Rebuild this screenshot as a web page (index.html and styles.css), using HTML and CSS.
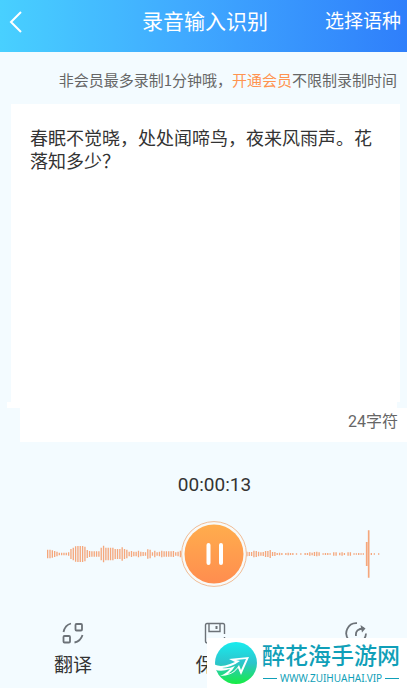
FILE: index.html
```html
<!DOCTYPE html>
<html lang="zh-CN">
<head>
<meta charset="utf-8">
<meta name="viewport" content="width=device-width, initial-scale=1">
<title>录音输入识别</title>
<link rel="stylesheet" href="styles.css">
</head>
<body>
<header class="topbar">
  <button class="back" type="button" aria-label="返回">
    <svg width="14" height="22" viewBox="0 0 14 22"><path d="M12 1L2 11L12 21" fill="none" stroke="#fff" stroke-width="2"/></svg>
  </button>
  <h1 class="title">录音输入识别</h1>
  <button class="language" type="button">选择语种</button>
</header>
<main>
  <p class="notice">非会员最多录制1分钟哦，<a href="#vip">开通会员</a>不限制录制时间</p>
  <textarea class="result" aria-label="识别结果">春眠不觉晓，处处闻啼鸟，夜来风雨声。花落知多少？</textarea>
  <div class="seam"></div>
  <div class="count">24字符</div>
  <div class="timer">00:00:13</div>
  <div class="recorder">
    <svg class="wave" viewBox="0 -75 1001 150" preserveAspectRatio="none" fill="none" stroke="#f5a77c" aria-hidden="true">
      <path stroke-width="4" d="M2-13V13M9-13V13M16-11V11M23-9V9M30-7V7M37-4V4M44-4V4M51-4V4M58-4V4M65-5V5M72-15V15M79-19V19M86-23V23M93-24V24M100-24V24M107-24V24M114-22V22M121-12V12M128-9V9M135-8V8M142-8V8M149-8V8M156-8V8M163-19V19M170-25V25M177-19V19M184-19V19M191-19V19M198-19V19M205-15V15M212-15V15M219-15V15M226-20V20M233-15V15M240-13V13M247-7V7M254-9V9M261-7V7M268-7V7M275-10V10M282-7V7M289-6V6M296-5V5M303-14V14M310-13V13M317-5V5M324-10V10M331-5V5M338-7V7M345-10V10M352-8V8M359-8V8M366-8V8M373-8V8M380-9V9M387-5V5M394-7V7M401-10V10M408-8V8"/>
      <path stroke-width="4" d="M594-8V8M601-7V7M608-6V6M615-6V6M622-10V10M629-9V9M636-7V7M643-5V5M650-6V6M657-9V9M664-9V9M671-12V12M678-6V6M685-6V6M692-3V3M699-4V4M706-3V3M718-3V3M725-4V4M732-3V3M739-3V3M750-2V2M763-2V2M776-3V3M783-3V3M790-5V5M797-4V4M804-6V6M811-7V7M818-5V5M830-2V2M837-3V3M844-3V3M851-2V2M862-5V5M869-5V5M880-4V4M887-5V5M894-3V3M905-5V5M912-5V5M923-2V2M930-2V2M937-3V3M944-2V2M951-2V2M975-3V3M984-2V2M997-2V2"/>
      <path stroke-width="5" d="M961-36V36M967-71V71"/>
    </svg>
    <button class="pause" type="button" aria-label="暂停录音">
      <svg width="66" height="66" viewBox="0 0 66 66">
        <defs><linearGradient id="orange" x1="0" y1="0" x2="0" y2="1"><stop offset="0" stop-color="#ffad4d"/><stop offset="1" stop-color="#ff8d4f"/></linearGradient></defs>
        <circle cx="33" cy="33" r="32.4" fill="#f8faf9" stroke="#f0bd97"/>
        <circle cx="33" cy="33" r="29.5" fill="url(#orange)"/>
        <path d="M27.500 24V42M40 24V42" stroke="#fff" stroke-width="4" stroke-linecap="round"/>
      </svg>
    </button>
  </div>
  <nav class="actions">
    <button class="action" type="button">
      <svg width="22" height="22" viewBox="0 0 22 22" fill="none" stroke="#6c7278" stroke-width="1.8"><path d="M1.500 10Q3 3 9 1.500M20.500 13Q18.500 19.500 12.500 20.500"/><rect x="13.500" y="2" width="6.500" height="6.500" rx="1"/><rect x="1.500" y="14" width="6.500" height="6.500" rx="1"/></svg>
      <span>翻译</span>
    </button>
    <button class="action" type="button">
      <svg width="22" height="22" viewBox="0 0 22 22" fill="none" stroke="#6c7278" stroke-width="1.4"><path d="M20.500 12V3Q20.500 1.500 19 1.500H3Q1.500 1.500 1.500 3V19Q1.500 21 3.500 21H18.500Q20.500 21 20.500 19V15M5 2V9.500H16V2"/><path d="M12.500 4V7" stroke-width="2"/></svg>
      <span>保存</span>
    </button>
    <button class="action" type="button" aria-label="分享">
      <svg width="22" height="22" viewBox="0 0 22 22" fill="none" stroke="#6c7278" stroke-width="1.8"><path d="M12 1.200A10 10 0 0 0 4 18M21 11.500A10 10 0 0 1 14 20.500M11 14Q10 6.500 19 6.500"/><path d="M15.500 3L20.500 6.500L17 10.500Z" fill="#6c7278" stroke="none"/></svg>
    </button>
  </nav>
</main>
<aside class="brand">
  <svg width="48" height="44" viewBox="0 0 48 44">
    <defs><linearGradient id="sea" x1="0" y1="0" x2="0" y2="44" gradientUnits="userSpaceOnUse"><stop offset="0" stop-color="#17eef0"/><stop offset=".5" stop-color="#2dc4cc"/><stop offset="1" stop-color="#16ef3c"/></linearGradient></defs>
    <circle cx="26" cy="22" r="21" fill="url(#sea)"/>
    <path d="M0 20Q7 28 20 23L25 21L19 18L39 16L31 34L28 27Q22 35 10 35Q17 32 20 28Q6 33 0 24Z" fill="#fff"/>
    <path d="M12 27Q22 26 30 20L26 19L36 18L31 29L29 24Q25 31 18 33Q23 29 25 25Q19 28 12 27Z" fill="url(#sea)"/>
  </svg>
  <div class="brand-text">
    <strong>醉花海手游网</strong>
    <small>WWW.ZUIHUAHAI.VIP</small>
  </div>
</aside>
</body>
</html>
```
FILE: styles.css
```css
* { box-sizing: border-box; }
body {
  margin: 0;
  min-height: 100vh;
  background: #f3fbff;
  color: #333;
  font-family: Roboto, "Noto Sans CJK SC", sans-serif;
  overflow: hidden;
}
button {
  padding: 0;
  border: 0;
  background: none;
  color: inherit;
  font: inherit;
}
svg { display: block; }
.topbar {
  display: grid;
  grid-template-columns: 80px 1fr 80px;
  align-items: center;
  height: 52px;
  padding: 0 6px 8px 9px;
  background: linear-gradient(90deg, #48d0ff, #40aaff 45%, #2f7ffb);
  color: #fff;
}
.title {
  margin: 0;
  font-size: 21px;
  font-weight: 400;
  line-height: 32px;
  text-align: center;
}
.language {
  font-size: 19px;
  line-height: 32px;
  text-align: right;
}
.notice {
  margin: 0;
  padding: 16px 10px 12px;
  color: #666;
  font-family: "Noto Sans CJK SC", sans-serif;
  font-size: 15px;
  line-height: 24px;
  text-align: right;
  white-space: nowrap;
}
.notice a {
  color: #ff9350;
  text-decoration: none;
}
.result {
  display: block;
  width: calc(100% - 18px);
  height: 298px;
  margin: 0 7px 0 11px;
  padding: 23px 19px;
  border: 0;
  outline: 0;
  resize: none;
  background: #fff;
  color: #333;
  font: inherit;
  font-size: 18px;
  line-height: 23px;
}
.seam {
  height: 6px;
  margin: 0 10px 0 7px;
  background: #fff;
}
.count {
  margin-left: 20px;
  padding: 2px 9px 8px;
  background: #fff;
  color: #666;
  font-size: 16px;
  line-height: 24px;
  text-align: right;
}
.timer {
  margin-left: 22px;
  padding-top: 31px;
  font-size: 19px;
  line-height: 24px;
  text-align: center;
}
.recorder {
  display: grid;
  align-items: center;
  margin-top: 24px;
  padding: 0 27px 0 47px;
}
.wave {
  grid-area: 1 / 1;
  width: 100%;
  height: 50px;
}
.pause {
  grid-area: 1 / 1;
  justify-self: center;
}
.actions {
  display: flex;
  justify-content: space-between;
  align-items: flex-start;
  margin: 35px 0 0 22px;
}
.action {
  display: flex;
  flex-direction: column;
  align-items: center;
  gap: 8px;
  width: 102px;
  font-size: 19px;
  line-height: 28px;
}
.brand {
  position: absolute;
  right: 0;
  bottom: 0;
  display: flex;
  align-items: center;
  gap: 4px;
  width: 200px;
  height: 50px;
  padding-left: 3px;
  background: #fff;
  color: #109fb8;
}
.brand-text {
  display: flex;
  flex-direction: column;
  align-items: center;
  padding-top: 4px;
}
.brand strong {
  font-size: 23px;
  font-weight: 500;
  line-height: 26px;
}
.brand small {
  display: flex;
  align-items: center;
  gap: 3px;
  font-family: "Noto Sans", sans-serif;
  font-size: 10px;
  line-height: 16px;
}
.brand small::before,
.brand small::after {
  content: "";
  width: 14px;
  height: 1px;
  background: currentColor;
}
```
